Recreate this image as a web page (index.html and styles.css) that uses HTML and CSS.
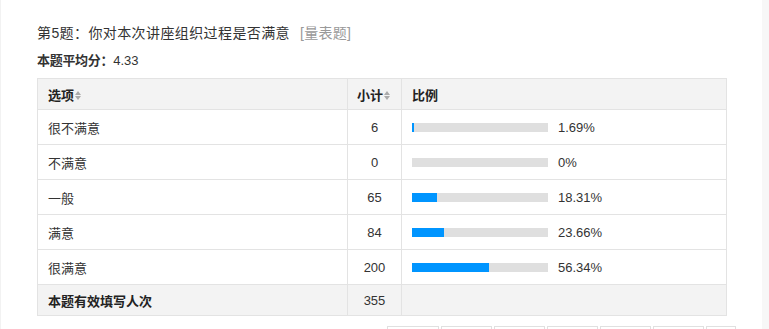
FILE: index.html
```html
<!DOCTYPE html>
<html lang="zh">
<head>
<meta charset="utf-8">
<link rel="stylesheet" href="styles.css">
</head>
<body>
<div class="page">
  <div class="main">
    <div class="title">第5题：你对本次讲座组织过程是否满意<span class="type">[量表题]</span></div>
    <div class="avg"><b>本题平均分：</b>4.33</div>
    <table class="tbl">
      <thead>
        <tr>
          <th class="c1">选项<span class="sort"><i class="up"></i><i class="dn"></i></span></th>
          <th class="c2">小计<span class="sort"><i class="up"></i><i class="dn"></i></span></th>
          <th class="c3">比例</th>
        </tr>
      </thead>
      <tbody>
        <tr><td>很不满意</td><td class="num">6</td><td><div class="pct"><div class="bar"><div class="fill" style="width:1.69%"></div></div><span>1.69%</span></div></td></tr>
        <tr><td>不满意</td><td class="num">0</td><td><div class="pct"><div class="bar"><div class="fill" style="width:0%"></div></div><span>0%</span></div></td></tr>
        <tr><td>一般</td><td class="num">65</td><td><div class="pct"><div class="bar"><div class="fill" style="width:18.31%"></div></div><span>18.31%</span></div></td></tr>
        <tr><td>满意</td><td class="num">84</td><td><div class="pct"><div class="bar"><div class="fill" style="width:23.66%"></div></div><span>23.66%</span></div></td></tr>
        <tr><td>很满意</td><td class="num">200</td><td><div class="pct"><div class="bar"><div class="fill" style="width:56.34%"></div></div><span>56.34%</span></div></td></tr>
        <tr class="foot"><td><b>本题有效填写人次</b></td><td class="num">355</td><td></td></tr>
      </tbody>
    </table>
    <div class="btns">
      <div class="btn w1"></div><div class="btn"></div><div class="btn"></div><div class="btn"></div><div class="btn"></div><div class="btn"></div><div class="btn last"></div>
    </div>
  </div>
  <div class="strip"></div>
</div>
</body>
</html>
```
FILE: styles.css
```css
html, body {
  margin: 0;
  padding: 0;
  background: #fff;
  overflow: hidden;
}
body {
  font-family: "Liberation Sans", "Noto Sans CJK SC", sans-serif;
  font-size: 13px;
  color: #333;
}
.page {
  display: flex;
  width: 769px;
  height: 329px;
  overflow: hidden;
}
.main {
  width: 762px;
  border-left: 1px solid #f2f2f2;
  padding: 24px 0 0 36px;
  box-sizing: border-box;
}
.strip {
  width: 7px;
  background: #f7f7f7;
}
.title {
  height: 18px;
  line-height: 18px;
  font-size: 14px;
  letter-spacing: 0.4px;
}
.type {
  color: #999;
  margin-left: 10px;
  letter-spacing: 0.3px;
}
.avg {
  margin-top: 10px;
  height: 18px;
  line-height: 18px;
}
.avg b {
  font-weight: bold;
  letter-spacing: -0.3px;
}
.tbl {
  margin-top: 8px;
  border-collapse: collapse;
  width: 690px;
  table-layout: fixed;
}
.tbl th, .tbl td {
  border: 1px solid #e3e3e3;
  padding: 0 0 0 10px;
  text-align: left;
  vertical-align: middle;
}
.tbl thead th {
  background: #f3f3f3;
  height: 30px;
  font-weight: bold;
  color: #222;
}
.c1 { width: 299px; }
.c2 { width: 44px; }
.tbl th.c2 { padding-left: 9px; }
.tbl tbody td {
  height: 34px;
}
.tbl td.num {
  text-align: center;
  padding: 0;
}
.tbl tr.foot td {
  background: #f3f3f3;
  height: 30px;
}
.tbl tr.foot b {
  font-weight: bold;
  color: #222;
}
.sort {
  display: inline-flex;
  flex-direction: column;
  gap: 1px;
  margin-left: 1px;
  vertical-align: middle;
  position: relative;
  top: -1px;
}
.sort i {
  display: block;
  width: 0;
  height: 0;
  border-left: 3px solid transparent;
  border-right: 3px solid transparent;
}
.sort .up { border-bottom: 4px solid #aaa; }
.sort .dn { border-top: 4px solid #aaa; }
.pct {
  display: flex;
  align-items: center;
}
.bar {
  width: 136px;
  height: 9px;
  background: #dfdfdf;
  margin-right: 10px;
}
.fill {
  height: 100%;
  background: #0095ff;
}
.btns {
  display: flex;
  margin: 10px 0 0 350px;
  gap: 2px;
}
.btn {
  width: 49px;
  height: 26px;
  border: 1px solid #e0e0e0;
  border-bottom: none;
  background: #fff;
  flex: none;
}
.btn.w1 { width: 50px; }
.btn.last { width: 28px; }
```
